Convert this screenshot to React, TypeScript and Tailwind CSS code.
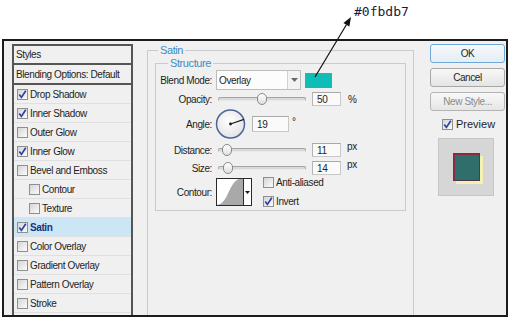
import type { ReactNode } from 'react'

interface Layer {
  name: string
  on?: boolean
  sub?: boolean
  active?: boolean
}

const layers: Layer[] = [
  { name: 'Drop Shadow', on: true },
  { name: 'Inner Shadow', on: true },
  { name: 'Outer Glow' },
  { name: 'Inner Glow', on: true },
  { name: 'Bevel and Emboss' },
  { name: 'Contour', sub: true },
  { name: 'Texture', sub: true },
  { name: 'Satin', on: true, active: true },
  { name: 'Color Overlay' },
  { name: 'Gradient Overlay' },
  { name: 'Pattern Overlay' },
  { name: 'Stroke' }
]

function Check({ on }: { on?: boolean }) {
  return (
    <span className="w-[11px] h-[11px] border border-[#8e8f8f] bg-linear-to-br from-[#d6d6d6] to-[#fbfbfb] flex items-center justify-center shrink-0">
      {on && (
        <svg width="9" height="9" viewBox="0 0 9 9">
          <path d="M1.3 4.6 L3.4 7.4 L7.8 0.8" fill="none" stroke="#2b3fa8" strokeWidth="1.7" />
        </svg>
      )}
    </span>
  )
}

function Label({ children }: { children: ReactNode }) {
  return <span className="w-[56px] text-right shrink-0">{children}</span>
}

function Slider({ pos }: { pos: number }) {
  return (
    <div className="ml-[6px] w-[88px] h-[14px] relative flex items-center shrink-0">
      <div className="w-full h-[4px] rounded-full border border-[#a4a4a4] border-b-[#e8e8e8] bg-[#d9d9d9]" />
      <div
        className="absolute top-[1px] w-[10px] h-[12px] rounded-full border border-[#8a8a8a] bg-linear-to-b from-white to-[#dedede]"
        style={{ left: pos - 5 }}
      />
    </div>
  )
}

function Field({ value, w, h }: { value: string; w: string; h: string }) {
  return (
    <div className={`${w} ${h} ml-[6px] border border-[#c8c8c8] border-t-[#a8a8a8] border-l-[#b4b4b4] bg-[#fafafa] pl-[4px] flex items-center shrink-0`}>
      {value}
    </div>
  )
}

function Button({ children, focus, dim }: { children: ReactNode; focus?: boolean; dim?: boolean }) {
  return (
    <div
      className={
        focus
          ? 'h-[19px] rounded-[3px] border border-[#6fa8d8] bg-linear-to-b from-[#f6f9fc] to-[#e4edf5] flex items-center justify-center text-[#1e1e1e]'
          : dim
            ? 'h-[19px] rounded-[3px] border border-[#b4b4b4] bg-linear-to-b from-[#f8f8f8] to-[#e6e6e6] flex items-center justify-center text-[#8a8a8a]'
            : 'h-[19px] rounded-[3px] border border-[#a8a8a8] bg-linear-to-b from-[#f8f8f8] to-[#e4e4e4] flex items-center justify-center text-[#1e1e1e]'
      }
    >
      {children}
    </div>
  )
}

export default function App() {
  return (
    <div className="w-[513px] h-[320px] bg-white relative overflow-hidden font-['Liberation_Sans',Arial,sans-serif] text-[10px] tracking-[-0.4px] text-[#1e1e1e]">
      <div className="h-[39px] pl-[354px] pt-[2px]">
        <span className="font-['DejaVu_Sans_Mono',monospace] text-[13px] tracking-normal text-[#1a1a40]">#0fbdb7</span>
      </div>

      <div className="ml-[2px] w-[506px] h-[278px] border-2 border-[#1c1c1c] bg-[#f0f0f0] flex items-start">
        {/* styles list */}
        <div className="ml-[8px] mt-[3px] w-[121px] h-[271px] border-2 border-b-0 border-[#555] flex flex-col">
          <div className="h-[19px] border-b-2 border-[#555] pl-[2px] flex items-center">Styles</div>
          <div className="h-[20px] border-b-2 border-[#555] pl-[2px] flex items-center">Blending Options: Default</div>
          {layers.map(l => (
            <div
              key={l.name}
              className={
                (l.active ? 'bg-[#cce6f6] font-bold text-[#17357a] ' : '') +
                (l.sub ? 'pl-[15px] ' : 'pl-[3px] ') +
                'h-[19px] border-b border-[#e0e0e0] flex items-center gap-[2px]'
              }
            >
              <Check on={l.on} />
              <span>{l.name}</span>
            </div>
          ))}
        </div>

        {/* satin */}
        <fieldset className="ml-[14px] mt-[3px] w-[267px] h-[271px] border border-b-0 border-[#cbcbcb] min-w-0">
          <legend className="ml-[10px] px-[2px] text-[11px] leading-[13px] text-[#3a8dc5]">Satin</legend>
          <fieldset className="ml-[7px] w-[251px] h-[154px] border border-[#cbcbcb] min-w-0">
            <legend className="ml-[12px] px-[2px] text-[11px] leading-[13px] text-[#3a8dc5]">Structure</legend>

            <div className="h-[20px] flex items-center">
              <Label>Blend Mode:</Label>
              <div className="ml-[4px] w-[85px] h-[20px] border border-[#bdbdbd] bg-[#fcfcfc] flex items-center shrink-0">
                <span className="flex-1 pl-[2px]">Overlay</span>
                <span className="w-[13px] h-full border-l border-[#d2d2d2] bg-[#f3f3f3] flex items-center justify-center">
                  <svg width="7" height="4" viewBox="0 0 7 4">
                    <path d="M0 0 H7 L3.5 4 Z" fill="#6a6a6a" />
                  </svg>
                </span>
              </div>
              <span className="ml-[4px] w-[27px] h-[15px] border border-[#8a8a8a] bg-[#0fbdb7] shrink-0" />
            </div>

            <div className="mt-[2px] h-[14px] flex items-center">
              <Label>Opacity:</Label>
              <Slider pos={44} />
              <Field value="50" w="w-[29px]" h="h-[14px]" />
              <span className="ml-[7px]">%</span>
            </div>

            <div className="mt-[3px] h-[30px] flex items-center">
              <Label>Angle:</Label>
              <svg className="ml-[3px] shrink-0" width="31" height="30" viewBox="0 0 31 30">
                <defs>
                  <radialGradient id="dial" cx="0.45" cy="0.4" r="0.6">
                    <stop offset="0" stopColor="#ffffff" />
                    <stop offset="1" stopColor="#e4e4e4" />
                  </radialGradient>
                </defs>
                <circle cx="15.5" cy="15" r="14" fill="url(#dial)" stroke="#4c6597" strokeWidth="1.5" />
                <line x1="15.5" y1="15" x2="29" y2="10.4" stroke="#1a1a1a" strokeWidth="1.2" />
                <circle cx="15.5" cy="15" r="1.4" fill="#1a1a1a" />
              </svg>
              <Field value="19" w="w-[37px] -ml-[2px]" h="h-[16px]" />
              <span className="ml-[3px] self-start mt-[5px] text-[10px] text-[#222]">°</span>
            </div>

            <div className="mt-[4px] h-[14px] flex items-center">
              <Label>Distance:</Label>
              <Slider pos={9} />
              <Field value="11" w="w-[29px]" h="h-[14px]" />
              <span className="ml-[6px] self-start leading-[8px]">px</span>
            </div>

            <div className="mt-[4px] h-[14px] flex items-center">
              <Label>Size:</Label>
              <Slider pos={10} />
              <Field value="14" w="w-[29px]" h="h-[14px]" />
              <span className="ml-[6px] self-start leading-[8px]">px</span>
            </div>

            <div className="mt-[3px] h-[28px] flex items-center">
              <Label>Contour:</Label>
              <div className="ml-[4px] w-[36px] h-[28px] border border-[#2a2a2a] bg-white flex shrink-0">
                <svg width="26" height="26" viewBox="0 0 26 26">
                  <path d="M0 26 C 11 25, 12 3, 22 0 L26 0 L26 26 Z" fill="#a9a9a9" />
                </svg>
                <span className="flex-1 border-l border-[#2a2a2a] flex items-center justify-center">
                  <svg width="5" height="3" viewBox="0 0 5 3">
                    <path d="M0 0 H5 L2.5 3 Z" fill="#1a1a1a" />
                  </svg>
                </span>
              </div>
              <div className="ml-[11px] flex flex-col gap-[4px]">
                <div className="flex items-center gap-[2px]">
                  <Check />
                  <span>Anti-aliased</span>
                </div>
                <div className="flex items-center gap-[2px]">
                  <Check on />
                  <span>Invert</span>
                </div>
              </div>
            </div>
          </fieldset>
        </fieldset>

        {/* buttons */}
        <div className="ml-[16px] mt-[3px] w-[75px] flex flex-col">
          <Button focus>OK</Button>
          <div className="mt-[5px]">
            <Button>Cancel</Button>
          </div>
          <div className="mt-[5px]">
            <Button dim>New Style...</Button>
          </div>
          <div className="mt-[5px] ml-[12px] flex items-center gap-[3px] text-[11px] tracking-normal">
            <Check on />
            <span>Preview</span>
          </div>
          <div className="ml-[8px] mt-[5px] w-[56px] h-[58px] bg-[#d6d6d6] border border-[#c6c6c6] flex items-center justify-center">
            <div className="w-[27px] h-[28px] bg-[#2f6e6b] border-t-2 border-l-2 border-[#8a2944] border-r border-b border-r-[#4a3a52] border-b-[#4a3a52] shadow-[3px_3px_0_#f4f2b0]" />
          </div>
        </div>
      </div>

      <svg className="absolute left-0 top-0 pointer-events-none" width="513" height="320" viewBox="0 0 513 320">
        <line x1="315" y1="77" x2="346.4" y2="24.7" stroke="#111" strokeWidth="1.2" />
        <path d="M351 17 L349.4 26.5 L343.4 22.9 Z" fill="#111" />
      </svg>
    </div>
  )
}
